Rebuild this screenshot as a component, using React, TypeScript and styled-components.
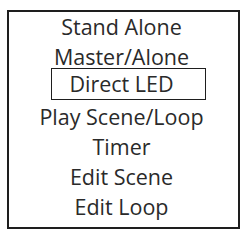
import React from 'react';
import styled, {createGlobalStyle} from "styled-components";

const GlobalStyle = createGlobalStyle`
    body {
        margin: 0;
        background: #ffffff;
        font-family: "Open Sans", "Liberation Sans", sans-serif;
    }
`

type itemType = {
    title: string
    selected?: boolean
}

const items: itemType[] = [
    {title: 'Stand Alone'},
    {title: 'Master/Alone'},
    {title: 'Direct LED', selected: true},
    {title: 'Play Scene/Loop'},
    {title: 'Timer'},
    {title: 'Edit Scene'},
    {title: 'Edit Loop'},
]

export default function App() {
    return (
        <>
            <GlobalStyle/>
            <Page>
                <MenuBox>
                    {items.map(item => (
                        <MenuItem key={item.title} $selected={item.selected}>{item.title}</MenuItem>
                    ))}
                </MenuBox>
            </Page>
        </>
    )
}

const Page = styled.div`
    width: 243px;
    height: 229px;
    padding: 10px 0 0 7px;
    box-sizing: border-box;
`

const MenuBox = styled.div`
    width: 233px;
    height: 219px;
    box-sizing: border-box;
    border: 2px solid #1e1e1e;
    padding-right: 4px;
    display: flex;
    flex-direction: column;
    align-items: center;
`

const MenuItem = styled.div<{ $selected?: boolean }>`
    font-size: 21.5px;
    font-weight: 500;
    color: #2a2a2a;
    text-align: center;
    white-space: nowrap;
    height: ${props => props.$selected ? '32px' : '30px'};
    line-height: ${props => props.$selected ? '29px' : '30px'};
    width: ${props => props.$selected ? '155px' : 'auto'};
    box-sizing: border-box;
    border: ${props => props.$selected ? '1.5px solid #1e1e1e' : 'none'};
    margin: ${props => props.$selected ? '-4px 0 2px 13px' : '0'};
    padding-right: ${props => props.$selected ? '13px' : '0'};
`
